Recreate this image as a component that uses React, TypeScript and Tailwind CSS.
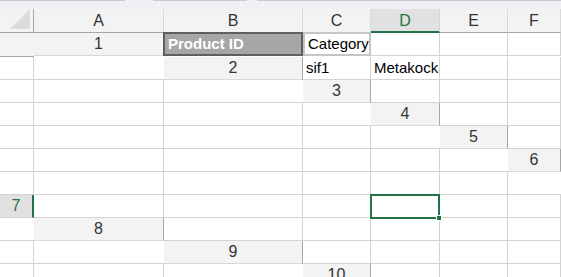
const cols = ["A", "B", "C", "D", "E", "F"];
const rows = [1, 2, 3, 4, 5, 6, 7, 8, 9, 10, 11];

const data: Record<string, string> = {
  A1: "Product ID",
  B1: "Category",
  A2: "sif1",
  B2: "Metakocka",
};

const Cell = ({ col, row }: { col: string; row: number }) => {
  const id = col + row;
  const text = data[id];

  if (id === "A1") {
    return (
      <div className="relative border-r border-b border-[#d4d4d4] h-[23px]">
        <div className="absolute -left-px -top-px right-[-1px] bottom-[-1px] bg-[#a6a6a6] border-2 border-[#5f5f5f] pl-[3px] flex items-center text-white font-bold text-[15px]">
          {text}
        </div>
      </div>
    );
  }

  if (id === "B1") {
    return (
      <div className="relative border-r border-b border-[#d4d4d4] h-[23px]">
        <div className="absolute left-0 -top-px right-[-1px] bottom-[-1px] border-2 border-[#c6c6c6] pl-[3px] flex items-center text-[15px] text-black">
          {text}
        </div>
      </div>
    );
  }

  if (id === "D7") {
    return (
      <div className="relative border-r border-b border-[#d4d4d4] h-[23px]">
        <div className="absolute -left-px -top-px right-[-1px] bottom-[-2px] border-2 border-[#217346]" />
        <div className="absolute right-[-3px] bottom-[-4px] w-[6px] h-[6px] bg-[#217346] border border-white" />
      </div>
    );
  }

  return (
    <div className="border-r border-b border-[#d4d4d4] h-[23px] pl-[3px] flex items-center text-[15px] text-black overflow-hidden whitespace-nowrap">
      {text}
    </div>
  );
};

const App = () => {
  return (
    <div className="w-[561px] h-[277px] overflow-hidden bg-white font-['Liberation_Sans',Arial,sans-serif]">
      <div className="h-[9px] bg-[#eef0f3] flex gap-[10px] items-start">
        <div className="w-[125px] h-px bg-[#c9cbce]" />
        <div className="w-[94px] h-px bg-[#c9cbce] ml-[18px]" />
        <div className="flex-1 h-px bg-[#c9cbce]" />
      </div>
      <div className="grid grid-cols-[34px_130px_139px_68px_69px_68px_1fr]">
        <div className="h-[24px] bg-[#f3f3f3] border-r border-b border-[#a6a6a6] flex items-end justify-end pb-[3px] pr-[3px]">
          <svg width="20" height="20" viewBox="0 0 20 20">
            <polygon points="20,0 20,20 0,20" fill="#dcdcdc" />
          </svg>
        </div>
        {cols.map((c) =>
          c === "D" ? (
            <div
              key={c}
              className="h-[24px] bg-[#e1e1e1] border-r border-[#d4d4d4] border-b-2 border-b-[#217346] flex items-center justify-center text-[16px] text-[#217346] pt-[2px]"
            >
              {c}
            </div>
          ) : (
            <div
              key={c}
              className="h-[24px] bg-[#f3f3f3] border-r border-[#d9d9d9] border-b border-b-[#a6a6a6] flex items-center justify-center text-[16px] text-[#333]"
            >
              {c}
            </div>
          )
        )}
        <div className="h-[24px] bg-[#f3f3f3] border-b border-b-[#a6a6a6]" />
        {rows.map((r) => (
          <div key={r} className="contents">
            {r === 7 ? (
              <div className="h-[23px] bg-[#e1e1e1] border-r-2 border-r-[#217346] border-b border-b-[#d4d4d4] flex items-center justify-center text-[16px] text-[#217346]">
                {r}
              </div>
            ) : (
              <div className="h-[23px] bg-[#f3f3f3] border-r border-r-[#a6a6a6] border-b border-b-[#d9d9d9] flex items-center justify-center text-[16px] text-[#333]">
                {r}
              </div>
            )}
            {cols.map((c) => (
              <Cell key={c} col={c} row={r} />
            ))}
            <div className="border-b border-[#d4d4d4] h-[23px]" />
          </div>
        ))}
      </div>
    </div>
  );
};

export default App;
